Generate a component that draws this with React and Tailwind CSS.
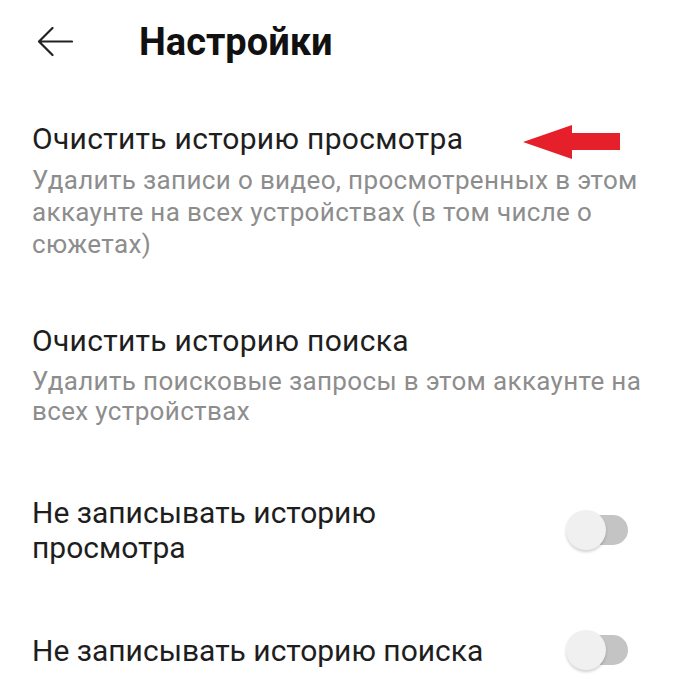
import React from "react";

function Toggle() {
  return (
    <div className="relative w-[62px] h-[40px] shrink-0">
      <div className="absolute right-0 top-[5px] h-[30px] w-[50px] rounded-full bg-[#c4c4c4]" />
      <div className="absolute left-0 top-0 h-[40px] w-[40px] rounded-full bg-[#f0f0f0] shadow-[0_2px_3px_rgba(0,0,0,0.18)]" />
    </div>
  );
}

export default function App() {
  return (
    <div
      className="w-[688px] h-[700px] bg-white overflow-hidden"
      style={{ fontFamily: "Roboto, 'Noto Sans', sans-serif" }}
    >
      {/* Header */}
      <div className="flex items-center h-[84px] pl-[37px]">
        <svg width="36" height="30" viewBox="0 0 36 30" className="shrink-0">
          <path d="M35 14.5 H2 M15.5 1 L2 14.5 L15.5 28" fill="none" stroke="#222" strokeWidth="2.2" strokeLinecap="round" strokeLinejoin="round" />
        </svg>
        <h1 className="ml-[66px] text-[38px] font-bold text-[#111] leading-none">Настройки</h1>
      </div>

      {/* Section 1 */}
      <div className="pl-[32px] pt-[35px]">
        <div className="relative">
          <div className="text-[30px] leading-[40px] tracking-[0.3px] text-[#1e1e1e]">Очистить историю просмотра</div>
          <svg className="absolute left-[491px] top-[6px]" width="100" height="36" viewBox="0 0 100 36">
            <polygon points="0,17 49,0 49,8 97,8 97,25 49,25 49,34" fill="#e5202a" />
          </svg>
        </div>
        <div className="mt-[5px] text-[26px] leading-[32px] tracking-[0.35px] text-[#8d8d8d]">
          <div>Удалить записи о видео, просмотренных в этом</div>
          <div>аккаунте на всех устройствах (в том числе о</div>
          <div>сюжетах)</div>
        </div>
      </div>

      {/* Section 2 */}
      <div className="pl-[32px] mt-[61px]">
        <div className="text-[30px] leading-[40px] tracking-[0.3px] text-[#1e1e1e]">Очистить историю поиска</div>
        <div className="mt-[5px] text-[26px] leading-[30px] tracking-[0.35px] text-[#8d8d8d]">
          <div>Удалить поисковые запросы в этом аккаунте на</div>
          <div>всех устройствах</div>
        </div>
      </div>

      {/* Row 3 */}
      <div className="flex items-center justify-between pl-[32px] pr-[60px] mt-[69px]">
        <div className="text-[30px] leading-[35px] text-[#1e1e1e]">
          <div>Не записывать историю</div>
          <div>просмотра</div>
        </div>
        <Toggle />
      </div>

      {/* Row 4 */}
      <div className="flex items-center justify-between pl-[32px] pr-[60px] mt-[65px]">
        <div className="text-[30px] leading-[35px] text-[#1e1e1e]">Не записывать историю поиска</div>
        <Toggle />
      </div>
    </div>
  );
}
